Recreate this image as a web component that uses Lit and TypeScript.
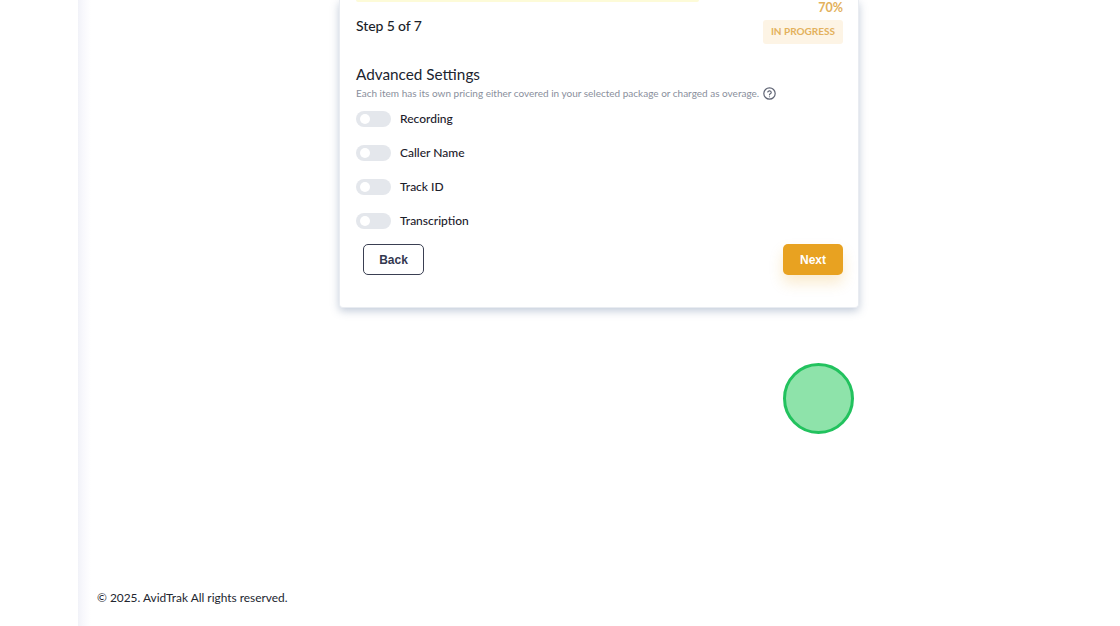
import { LitElement, html, css } from "lit";
import { customElement } from "lit/decorators.js";

@customElement("app-root")
export class AppRoot extends LitElement {
  static styles = css`
    :host { display: block; width: 1120px; height: 626px; overflow: hidden; position: relative; background: #fff;
      font-family: "Lato", "Noto Sans", sans-serif; color: #1b1f2a; }
    * { box-sizing: border-box; }
    .page { display: flex; height: 626px; }
    .gutter { width: 78px; flex: none; }
    .main { flex: 1; display: flex; flex-direction: column; align-items: center; position: relative;
      background: linear-gradient(90deg, #f1f2f8 0, #f8f8fc 5px, #fff 13px); }
    .card { width: 520px; height: 308px; flex: none; background: #fff; border: 1px solid #e9ecf1; border-top: none; border-radius: 0 0 4px 4px;
      box-shadow: 0 3px 8px rgba(120, 140, 170, .45); padding: 0 15px 0 16px; display: flex; flex-direction: column; }
    .bar { width: 343px; height: 2px; background: #fdfbd8; border-radius: 0 0 2px 2px; flex: none; }
    .top { display: flex; justify-content: space-between; height: 42px; flex: none; }
    .step { font-size: 14px; line-height: 20px; margin-top: 14px; font-weight: 500; letter-spacing: -.1px; }
    .right { display: flex; flex-direction: column; align-items: flex-end; }
    .pct { font-size: 12.5px; line-height: 16px; color: #e3b15c; font-weight: 700; margin-top: -2px; }
    .badge { margin-top: 4px; height: 24px; padding: 0 8px; border-radius: 3px; background: #fdf4e5; color: #e3b15c;
      font-size: 10px; font-weight: 700; line-height: 23px; white-space: nowrap; }
    h2 { font-size: 15.3px; line-height: 22px; font-weight: 400; margin: 19px 0 0; color: #20242f; }
    .desc { display: flex; align-items: center; gap: 4px; font-size: 10px; line-height: 15px; color: #8a8f9c; margin-top: 1px; }
    .desc svg { display: block; flex: none; }
    .rows { display: flex; flex-direction: column; gap: 18px; margin-top: 10px; }
    .row { display: flex; align-items: center; gap: 9px; height: 16px; font-size: 12px; font-weight: 500; color: #1c202b; }
    .row span { margin-top: -2px; }
    .toggle { width: 35px; height: 16px; border-radius: 8px; background: #e4e7ec; padding: 3px 4px; flex: none; }
    .knob { width: 10px; height: 10px; border-radius: 50%; background: #fff; }
    .actions { display: flex; justify-content: space-between; padding: 0 0 0 7px; margin-top: 15px; }
    .btn { height: 31px; border-radius: 5px; font-family: "Liberation Sans", sans-serif; font-size: 12px; font-weight: 700;
      display: flex; align-items: center; justify-content: center; }
    .back { width: 61px; border: 1px solid #3a3f52; color: #33384f; background: #fff; }
    .next { width: 60px; background: #e8a221; color: #fff; box-shadow: 0 8px 14px rgba(232, 162, 33, .22); }
    .spacer { flex: 1; }
    .footer { align-self: stretch; padding: 0 0 20px 19px; font-size: 11.9px; line-height: 16px; color: #22262f; }
    .dot { position: absolute; left: 782.5px; top: 362.5px; width: 71px; height: 71px; border-radius: 50%;
      background: #8ee3aa; border: 3px solid #22c25e; }
  `;

  render() {
    const items = ["Recording", "Caller Name", "Track ID", "Transcription"];
    return html`
      <div class="page">
        <div class="gutter"></div>
        <div class="main">
          <div class="card">
            <div class="bar"></div>
            <div class="top">
              <div class="step">Step 5 of 7</div>
              <div class="right">
                <div class="pct">70%</div>
                <div class="badge">IN PROGRESS</div>
              </div>
            </div>
            <h2>Advanced Settings</h2>
            <div class="desc">
              <span>Each item has its own pricing either covered in your selected package or charged as overage.</span>
              <svg width="13" height="13" viewBox="0 0 24 24" fill="none" stroke="#5f6474" stroke-width="2.2" stroke-linecap="round" stroke-linejoin="round">
                <circle cx="12" cy="12" r="10.5"></circle>
                <path d="M8.8 9.2a3.3 3.3 0 0 1 6.4 1c0 2.2-3.2 2.6-3.2 4.3"></path>
                <path d="M12 18h.01"></path>
              </svg>
            </div>
            <div class="rows">
              ${items.map((t) => html`<div class="row"><div class="toggle"><div class="knob"></div></div><span>${t}</span></div>`)}
            </div>
            <div class="actions">
              <div class="btn back">Back</div>
              <div class="btn next">Next</div>
            </div>
          </div>
          <div class="spacer"></div>
          <div class="footer">© 2025. AvidTrak All rights reserved.</div>
        </div>
      </div>
      <div class="dot"></div>
    `;
  }
}
